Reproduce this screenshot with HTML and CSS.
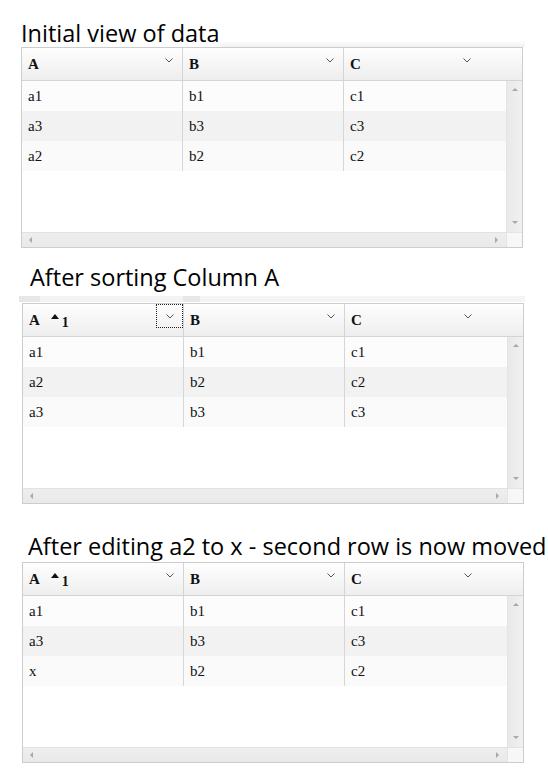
FILE: index.html
```html
<!DOCTYPE html>
<html>
<head>
<meta charset="utf-8">
<title>Grid sorting demo</title>
<link rel="stylesheet" href="styles.css">
</head>
<body>
<main class="page">
  <section class="demo demo-1">
    <div class="title-row">
      <h2 class="title">Initial view of data</h2>
      <div class="title-shadow"></div>
    </div>
    <div class="grid">
      <div class="grid-header">
        <div class="hcell"><span class="hlabel">A</span><span class="menu-btn"><svg class="chev" width="8" height="5" viewBox="0 0 8 5"><polyline points="0.5,0.5 4,4 7.5,0.5" fill="none" stroke="#555" stroke-width="1"/></svg></span></div>
        <div class="hcell"><span class="hlabel">B</span><span class="menu-btn"><svg class="chev" width="8" height="5" viewBox="0 0 8 5"><polyline points="0.5,0.5 4,4 7.5,0.5" fill="none" stroke="#555" stroke-width="1"/></svg></span></div>
        <div class="hcell"><span class="hlabel">C</span><span class="menu-btn"><svg class="chev" width="8" height="5" viewBox="0 0 8 5"><polyline points="0.5,0.5 4,4 7.5,0.5" fill="none" stroke="#555" stroke-width="1"/></svg></span></div>
      </div>
      <div class="grid-body">
        <div class="viewport">
          <div class="row"><div class="cell">a1</div><div class="cell">b1</div><div class="cell">c1</div></div>
          <div class="row row-alt"><div class="cell">a3</div><div class="cell">b3</div><div class="cell">c3</div></div>
          <div class="row row-3"><div class="cell">a2</div><div class="cell">b2</div><div class="cell">c2</div></div>
        </div>
        <div class="vscroll"><span class="arrow arrow-up"></span><span class="arrow arrow-down"></span></div>
      </div>
      <div class="hscroll-row">
        <div class="hscroll"><span class="arrow arrow-left"></span><span class="arrow arrow-right"></span></div>
        <div class="corner"></div>
      </div>
    </div>
  </section>

  <section class="demo demo-2">
    <div class="title-row">
      <h2 class="title">After sorting Column A</h2>
    </div>
    <div class="drag-band"></div>
    <div class="grid">
      <div class="grid-header">
        <div class="hcell"><span class="hlabel">A<span class="sort"><span class="sort-tri"></span><span class="sort-num">1</span></span></span><span class="menu-btn focused"><svg class="chev" width="8" height="5" viewBox="0 0 8 5"><polyline points="0.5,0.5 4,4 7.5,0.5" fill="none" stroke="#555" stroke-width="1"/></svg></span></div>
        <div class="hcell"><span class="hlabel">B</span><span class="menu-btn"><svg class="chev" width="8" height="5" viewBox="0 0 8 5"><polyline points="0.5,0.5 4,4 7.5,0.5" fill="none" stroke="#555" stroke-width="1"/></svg></span></div>
        <div class="hcell"><span class="hlabel">C</span><span class="menu-btn"><svg class="chev" width="8" height="5" viewBox="0 0 8 5"><polyline points="0.5,0.5 4,4 7.5,0.5" fill="none" stroke="#555" stroke-width="1"/></svg></span></div>
      </div>
      <div class="grid-body">
        <div class="viewport">
          <div class="row"><div class="cell">a1</div><div class="cell">b1</div><div class="cell">c1</div></div>
          <div class="row row-alt"><div class="cell">a2</div><div class="cell">b2</div><div class="cell">c2</div></div>
          <div class="row row-3"><div class="cell">a3</div><div class="cell">b3</div><div class="cell">c3</div></div>
        </div>
        <div class="vscroll"><span class="arrow arrow-up"></span><span class="arrow arrow-down"></span></div>
      </div>
      <div class="hscroll-row">
        <div class="hscroll"><span class="arrow arrow-left"></span><span class="arrow arrow-right"></span></div>
        <div class="corner"></div>
      </div>
    </div>
  </section>

  <section class="demo demo-3">
    <div class="title-row">
      <h2 class="title">After editing a2 to x - second row is now moved</h2>
    </div>
    <div class="grid">
      <div class="grid-header">
        <div class="hcell"><span class="hlabel">A<span class="sort"><span class="sort-tri"></span><span class="sort-num">1</span></span></span><span class="menu-btn"><svg class="chev" width="8" height="5" viewBox="0 0 8 5"><polyline points="0.5,0.5 4,4 7.5,0.5" fill="none" stroke="#555" stroke-width="1"/></svg></span></div>
        <div class="hcell"><span class="hlabel">B</span><span class="menu-btn"><svg class="chev" width="8" height="5" viewBox="0 0 8 5"><polyline points="0.5,0.5 4,4 7.5,0.5" fill="none" stroke="#555" stroke-width="1"/></svg></span></div>
        <div class="hcell"><span class="hlabel">C</span><span class="menu-btn"><svg class="chev" width="8" height="5" viewBox="0 0 8 5"><polyline points="0.5,0.5 4,4 7.5,0.5" fill="none" stroke="#555" stroke-width="1"/></svg></span></div>
      </div>
      <div class="grid-body">
        <div class="viewport">
          <div class="row"><div class="cell">a1</div><div class="cell">b1</div><div class="cell">c1</div></div>
          <div class="row row-alt"><div class="cell">a3</div><div class="cell">b3</div><div class="cell">c3</div></div>
          <div class="row row-3"><div class="cell">x</div><div class="cell">b2</div><div class="cell">c2</div></div>
        </div>
        <div class="vscroll"><span class="arrow arrow-up"></span><span class="arrow arrow-down"></span></div>
      </div>
      <div class="hscroll-row">
        <div class="hscroll"><span class="arrow arrow-left"></span><span class="arrow arrow-right"></span></div>
        <div class="corner"></div>
      </div>
    </div>
  </section>
</main>
</body>
</html>
```

FILE: styles.css
```css
* { box-sizing: border-box; }
html, body { margin: 0; padding: 0; background: #fff; }
body { font-family: "Open Sans", "Noto Sans", sans-serif; color: #000; }

.page { display: flex; flex-direction: column; width: 548px; }
.demo { display: flex; flex-direction: column; }
.demo-1 { padding-top: 20px; }
.demo-2 { margin-top: 16px; }
.demo-3 { margin-top: 29px; }

.title-row { display: flex; align-items: flex-end; }
.demo-1 .title-row { padding-left: 21px; }
.demo-2 .title-row { padding-left: 30px; }
.demo-3 .title-row { padding-left: 28px; }

.title {
  margin: 0;
  font-weight: normal;
  font-size: 23.5px;
  line-height: 27px;
  white-space: nowrap;
  color: #000;
}

.title-shadow {
  flex: 1;
  height: 5px;
  margin-right: 23px;
  background: linear-gradient(#fbfbfb, #f2f2f2);
}

.drag-band {
  margin: 5px 23px 1px 19px;
  height: 6px;
  background: linear-gradient(to right, #e7e7e7 0, #e7e7e7 21px, #f3f3f3 21px, #f3f3f3 164px, #e7e7e7 164px, #e7e7e7 181px, #f4f4f4 181px);
}

.grid {
  width: 502px;
  height: 201px;
  border: 1px solid #cdcdcd;
  display: flex;
  flex-direction: column;
  background: #fff;
  font-family: "Liberation Serif", "Times New Roman", serif;
  font-size: 15px;
  color: #111;
}
.demo-1 .grid { margin-left: 21px; }
.demo-2 .grid { margin-left: 22px; }
.demo-3 .grid { margin-left: 22px; margin-top: 2px; }

.grid-header {
  flex: none;
  display: flex;
  height: 33px;
  border-bottom: 1px solid #d4d4d4;
  background: linear-gradient(#fefefe, #eeeeee);
}

.hcell {
  width: 161px;
  flex: none;
  display: flex;
  align-items: flex-start;
  justify-content: space-between;
  padding-left: 6px;
  border-right: 1px solid #d4d4d4;
}
.hcell:last-child {
  flex: 1;
  border-right: 0;
  padding-right: 42px;
}

.hlabel {
  font-weight: bold;
  line-height: 30px;
  padding-top: 1px;
  white-space: nowrap;
}

.sort { margin-left: 11px; }
.sort-tri {
  display: inline-block;
  width: 0;
  height: 0;
  border-left: 4px solid transparent;
  border-right: 4px solid transparent;
  border-bottom: 5px solid #111;
  vertical-align: 6px;
}
.sort-num {
  font-size: 14px;
  margin-left: 3px;
  position: relative;
  top: 2px;
}

.menu-btn {
  width: 27px;
  height: 24px;
  display: flex;
  align-items: center;
  justify-content: center;
  border: 1px dotted transparent;
}
.menu-btn.focused { border-color: #222; }
.chev { display: block; }

.grid-body { flex: 1; display: flex; min-height: 0; }
.viewport { flex: 1; background: #fff; }

.row { display: flex; height: 30px; background: #fcfcfc; }
.row-alt { background: #f2f2f2; }
.row-3 { background: #fafafa; }

.cell {
  width: 161px;
  flex: none;
  padding-left: 6px;
  line-height: 30px;
  border-right: 1px solid #d6d6d6;
}
.cell:last-child { flex: 1; border-right: 0; }

.vscroll {
  width: 16px;
  flex: none;
  background: linear-gradient(to right, #e9e9e9, #f0f0f0);
  border-left: 1px solid #e4e4e4;
  display: flex;
  flex-direction: column;
  justify-content: space-between;
  align-items: center;
  padding: 7px 0 8px;
}

.hscroll-row { flex: none; display: flex; height: 15px; }
.hscroll {
  flex: 1;
  background: linear-gradient(#eeeeee, #e9e9e9);
  border-top: 1px solid #e2e2e2;
  display: flex;
  justify-content: space-between;
  align-items: center;
  padding: 0 8px 0 7px;
}
.corner {
  width: 16px;
  flex: none;
  background: #f7f7f7;
  border-left: 1px solid #e4e4e4;
  border-top: 1px solid #e4e4e4;
}

.arrow { display: block; width: 0; height: 0; }
.arrow-up {
  border-left: 3px solid transparent;
  border-right: 3px solid transparent;
  border-bottom: 3px solid #a8a8a8;
}
.arrow-down {
  border-left: 3px solid transparent;
  border-right: 3px solid transparent;
  border-top: 3px solid #a8a8a8;
}
.arrow-left {
  border-top: 3px solid transparent;
  border-bottom: 3px solid transparent;
  border-right: 3px solid #a8a8a8;
}
.arrow-right {
  border-top: 3px solid transparent;
  border-bottom: 3px solid transparent;
  border-left: 3px solid #a8a8a8;
}
```
